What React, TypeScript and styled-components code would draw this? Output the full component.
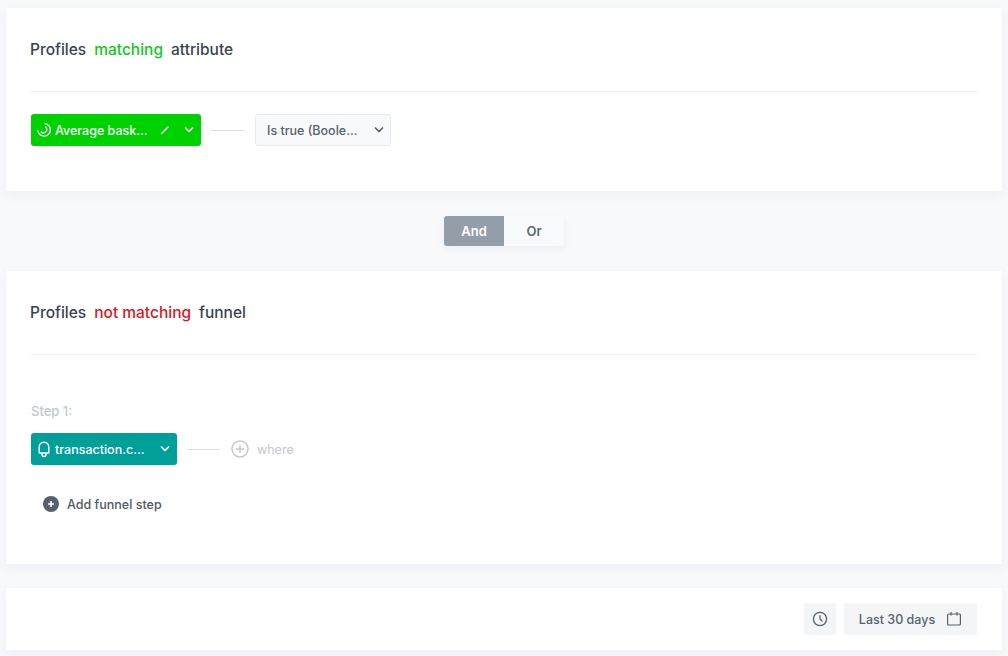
import React from "react";
import styled, { createGlobalStyle } from "styled-components";

const Global = createGlobalStyle`
  html, body { margin: 0; padding: 0; background: #f8f9fb; height: 100%; overflow: hidden; }
  * { box-sizing: border-box; }
  body { font-family: Inter, "Liberation Sans", sans-serif; -webkit-font-smoothing: antialiased; }
`;
const Page = styled.div`
  width: 1008px; height: 656px; padding: 8px 6px 0; display: flex; flex-direction: column;
`;
const Card = styled.section<{ $h: number }>`
  background: #fff; height: ${p => p.$h}px; flex: none; padding: 0 24px;
  box-shadow: 0 4px 12px rgba(35, 45, 70, 0.05);
`;
const Header = styled.header`
  height: 84px; border-bottom: 1px solid #f0f2f5; display: flex; align-items: center; gap: 8px;
  font-size: 15.5px; font-weight: 500; color: #384350; letter-spacing: 0;
`;
const Accent = styled.span<{ $c: string }>` color: ${p => p.$c}; `;
const Row = styled.div<{ $top: number }>`
  display: flex; align-items: center; margin-top: ${p => p.$top}px; padding-left: 1px;
`;
const Chip = styled.div<{ $bg: string; $w: number }>`
  width: ${p => p.$w}px; height: 32px; border-radius: 3px; background: ${p => p.$bg}; color: #fff;
  display: flex; align-items: center; padding: 0 7px 0 5px; font-size: 12.5px; font-weight: 500;
`;
const ChipLabel = styled.span` margin-left: 3px; flex: 1; white-space: nowrap; `;
const Connector = styled.div` width: 33px; height: 1px; background: #dbe0e5; margin: 0 11px 0 10px; `;
const SelectBox = styled.div`
  width: 136px; height: 32px; border: 1px solid #e7eaee; border-radius: 3px; background: #f8f9fb;
  display: flex; align-items: center; justify-content: space-between; padding: 0 6px 0 11px;
  font-size: 12.5px; font-weight: 500; color: #57616d;
`;
const ToggleRow = styled.div` height: 80px; flex: none; display: flex; justify-content: center; align-items: center; padding-bottom: 0; `;
const Toggle = styled.div`
  display: flex; width: 120px; height: 30px; border-radius: 3px; box-shadow: 0 3px 8px rgba(35, 45, 70, 0.05);
`;
const ToggleBtn = styled.div<{ $on?: boolean }>`
  width: 60px; display: flex; align-items: center; justify-content: center; font-size: 13px; font-weight: 600;
  background: ${p => (p.$on ? "#949ea8" : "#f9fafc")}; color: ${p => (p.$on ? "#fff" : "#5d6772")};
  border-radius: ${p => (p.$on ? "3px 0 0 3px" : "0 3px 3px 0")};
`;
const StepLabel = styled.div`
  margin-top: 48px; height: 16px; line-height: 16px; padding-left: 1px; font-size: 13px; font-weight: 500; color: #c3c8ce;
`;
const Where = styled.span` font-size: 12.5px; color: #c3c8ce; margin-left: 8px; `;
const AddStep = styled.div`
  display: flex; align-items: center; gap: 8px; margin: 31px 0 0 13px; height: 16px;
  font-size: 12.5px; font-weight: 500; color: #4e5964;
`;
const Footer = styled.div`
  height: 100%; display: flex; align-items: center; justify-content: flex-end; gap: 8px; margin-right: 1px;
`;
const GreyBtn = styled.div`
  height: 32px; min-width: 32px; border-radius: 3px; background: #f3f5f7; color: #57616d;
  display: flex; align-items: center; justify-content: center; gap: 11px; font-size: 12.5px; font-weight: 500;
`;
const DateBtn = styled(GreyBtn)` width: 133px; `;
const Spacer = styled.div` height: 24px; flex: none; `;

const Chevron = ({ c }: { c: string }) => (
  <svg width="10" height="8" viewBox="0 0 10 8" fill="none"><path d="M1.5 2l3.5 3.5L8.5 2" stroke={c} strokeWidth="1.7" strokeLinecap="round" strokeLinejoin="round" /></svg>
);
const Pencil = () => (
  <svg width="10" height="10" viewBox="0 0 10 10" fill="none"><path d="M1.5 8.5L8 2" stroke="#fff" strokeWidth="1.4" strokeLinecap="round" /></svg>
);
const Swirl = () => (
  <svg width="16" height="16" viewBox="0 0 16 16" fill="none" stroke="#fff" strokeWidth="1.3" strokeLinecap="round">
    <path d="M9 1.6A6.3 6.3 0 1 1 1.8 8.5" />
    <path d="M9.5 4.8A3.6 3.6 0 0 1 10.8 8a3.3 3.3 0 0 1-5.6 2" />
  </svg>
);
const Bell = () => (
  <svg width="16" height="18" viewBox="0 0 16 18" fill="none" stroke="#fff" strokeWidth="1.4" strokeLinejoin="round">
    <path d="M3.2 13V7a4.8 4.8 0 0 1 9.6 0v6z" />
    <path d="M6 13.3v1.2a2 2 0 0 0 4 0v-1.2" />
  </svg>
);
const PlusOutline = () => (
  <svg width="18" height="18" viewBox="0 0 18 18" fill="none" stroke="#c3c8ce" strokeWidth="1.4"><circle cx="9" cy="9" r="8" /><path d="M9 5v8M5 9h8" /></svg>
);
const PlusFilled = () => (
  <svg width="16" height="16" viewBox="0 0 16 16"><circle cx="8" cy="8" r="8" fill="#56616d" /><path d="M8 5v6M5 8h6" stroke="#fff" strokeWidth="1.6" /></svg>
);
const Clock = () => (
  <svg width="16" height="16" viewBox="0 0 16 16" fill="none" stroke="#57616d" strokeWidth="1.3" strokeLinecap="round"><circle cx="8" cy="8" r="6.6" /><path d="M8 4.6V8l2 2" /></svg>
);
const Calendar = () => (
  <svg width="16" height="16" viewBox="0 0 16 16" fill="none" stroke="#57616d" strokeWidth="1.2"><rect x="1.6" y="3" width="12.8" height="11" rx="1" /><path d="M5 1v3.5M11 1v3.5" /></svg>
);

export default function App() {
  return (
    <Page>
      <Global />
      <Card $h={183}>
        <Header>Profiles <Accent $c="#14c81e">matching</Accent> attribute</Header>
        <Row $top={22}>
          <Chip $bg="#00d100" $w={170}>
            <Swirl />
            <ChipLabel>Average bask...</ChipLabel>
            <Pencil />
            <span style={{ width: 14 }} />
            <Chevron c="#fff" />
          </Chip>
          <Connector />
          <SelectBox>Is true (Boole...<Chevron c="#57616d" /></SelectBox>
        </Row>
      </Card>
      <ToggleRow>
        <Toggle>
          <ToggleBtn $on>And</ToggleBtn>
          <ToggleBtn>Or</ToggleBtn>
        </Toggle>
      </ToggleRow>
      <Card $h={293}>
        <Header>Profiles <Accent $c="#e0161c">not matching</Accent> funnel</Header>
        <StepLabel>Step 1:</StepLabel>
        <Row $top={14}>
          <Chip $bg="#009f9a" $w={146}>
            <Bell />
            <ChipLabel>transaction.c...</ChipLabel>
            <Chevron c="#fff" />
          </Chip>
          <Connector />
          <PlusOutline />
          <Where>where</Where>
        </Row>
        <AddStep><PlusFilled />Add funnel step</AddStep>
      </Card>
      <Spacer />
      <Card $h={62}>
        <Footer>
          <GreyBtn><Clock /></GreyBtn>
          <DateBtn>Last 30 days<Calendar /></DateBtn>
        </Footer>
      </Card>
    </Page>
  );
}
